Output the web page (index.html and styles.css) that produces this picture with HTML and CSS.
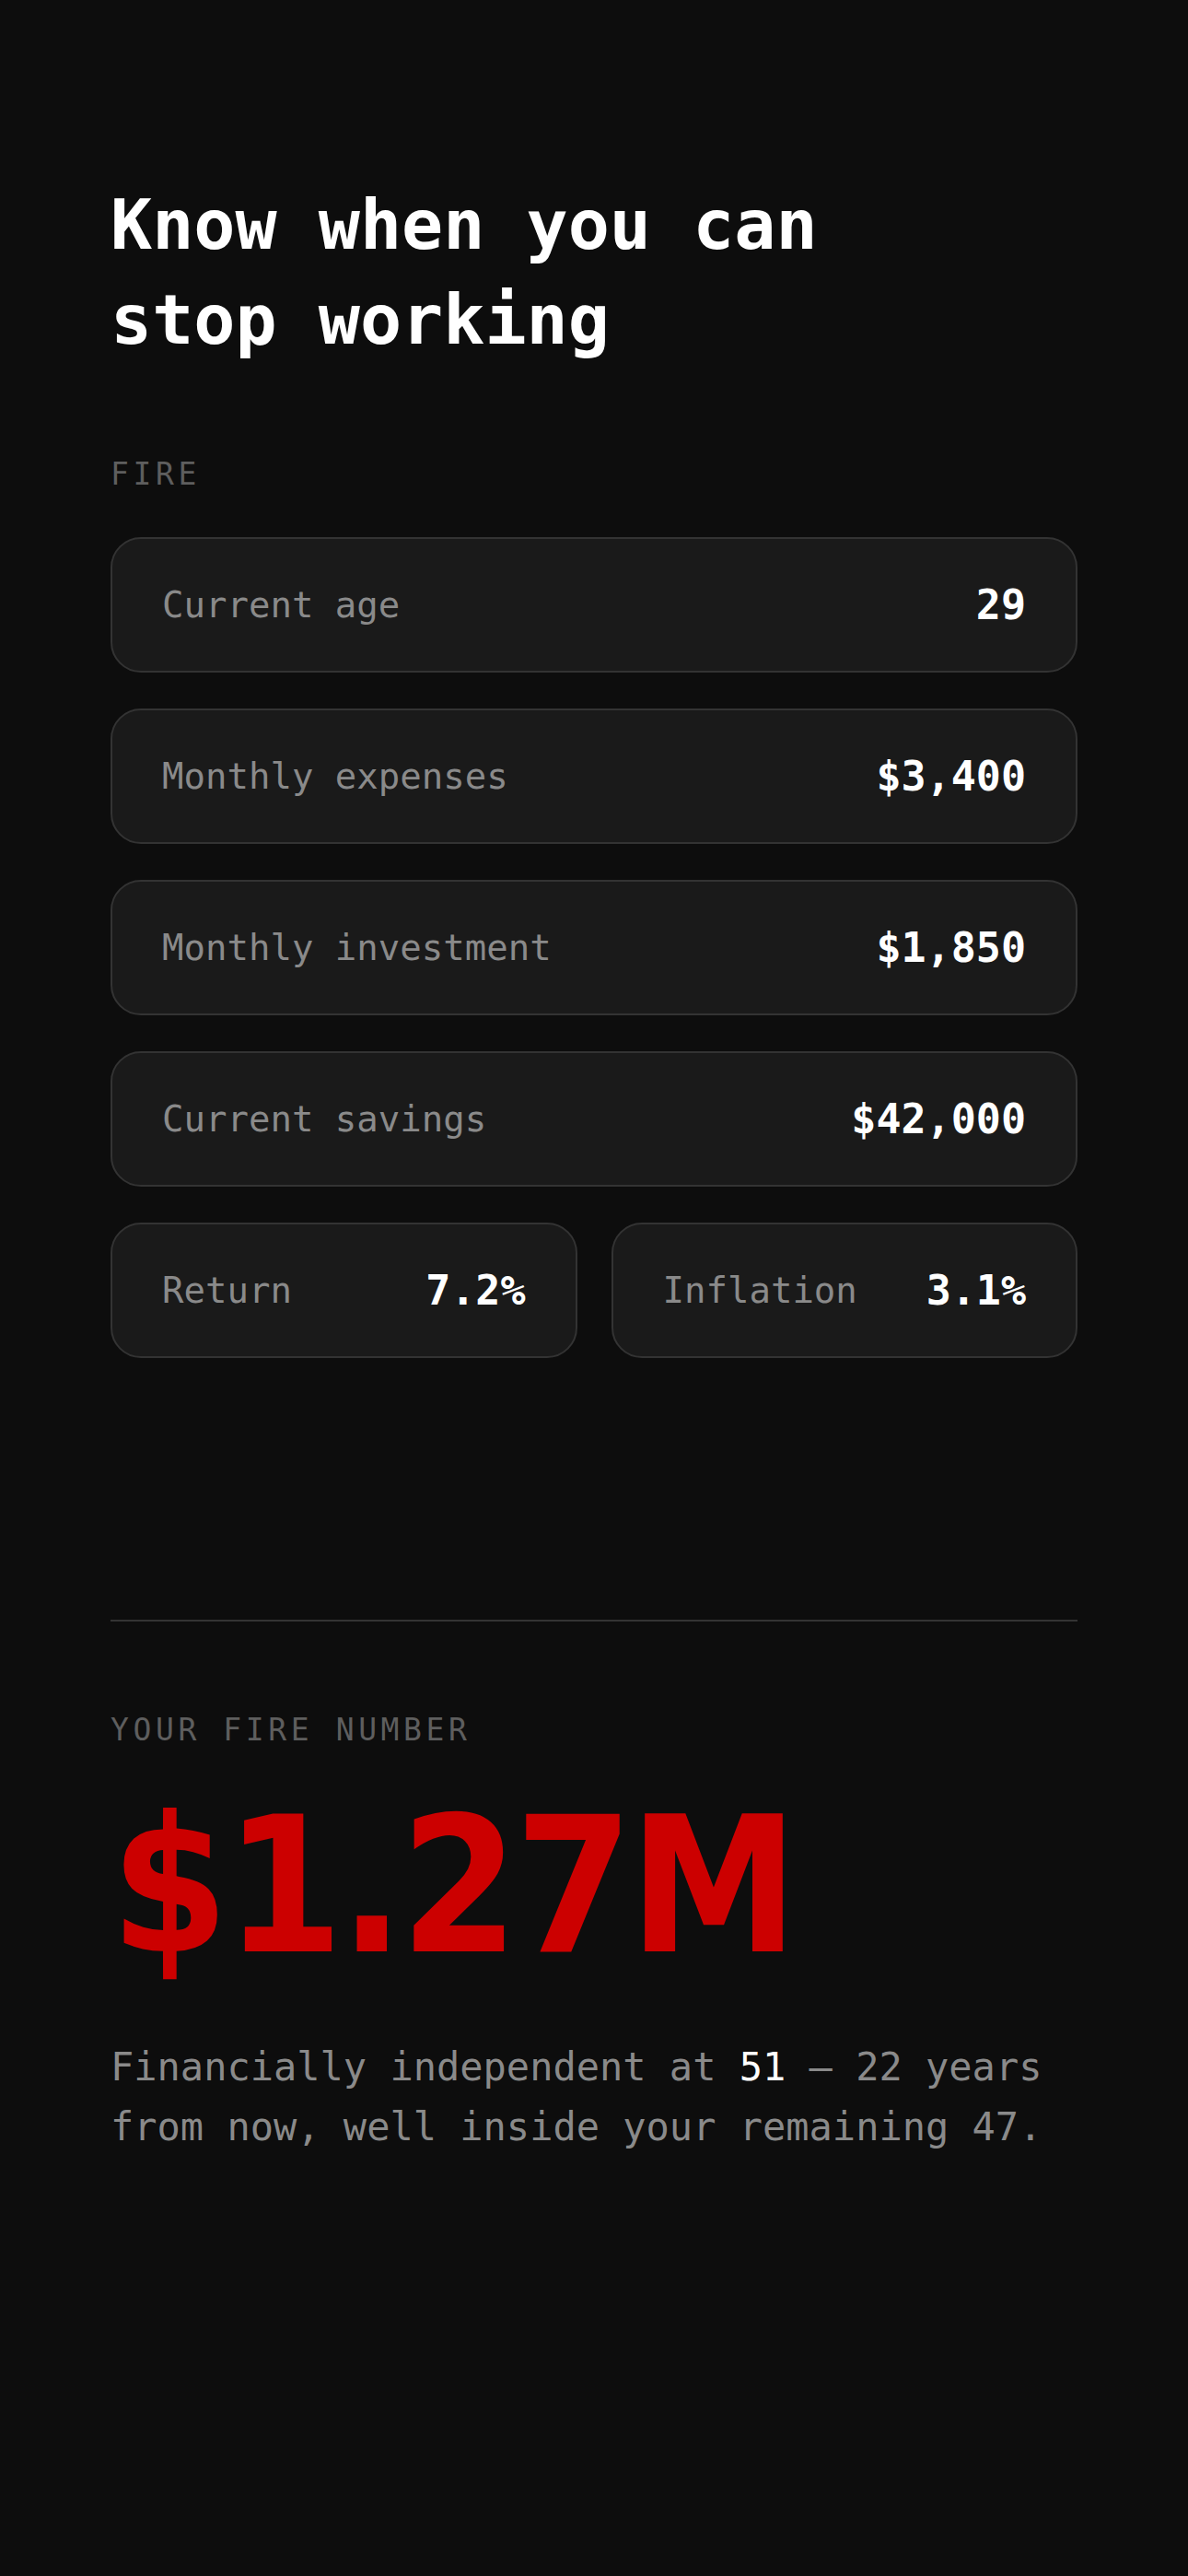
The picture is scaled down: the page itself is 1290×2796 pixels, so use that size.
FILE: index.html
```html
<!DOCTYPE html>
<html lang="en">
<head>
    <meta charset="UTF-8">
    <meta name="viewport" content="width=device-width, initial-scale=1.0">
    <title>FIRE Calculator</title>
    <link rel="stylesheet" href="styles.css">
</head>
<body>
    <main class="page">
        <h1 class="title">Know when you can stop working</h1>

        <section class="inputs">
            <div class="section-label">FIRE</div>
            <div class="fields">
                <div class="field">
                    <span class="field-label">Current age</span>
                    <span class="field-value">29</span>
                </div>
                <div class="field">
                    <span class="field-label">Monthly expenses</span>
                    <span class="field-value">$3,400</span>
                </div>
                <div class="field">
                    <span class="field-label">Monthly investment</span>
                    <span class="field-value">$1,850</span>
                </div>
                <div class="field">
                    <span class="field-label">Current savings</span>
                    <span class="field-value">$42,000</span>
                </div>
                <div class="field-row">
                    <div class="field">
                        <span class="field-label">Return</span>
                        <span class="field-value">7.2%</span>
                    </div>
                    <div class="field">
                        <span class="field-label">Inflation</span>
                        <span class="field-value">3.1%</span>
                    </div>
                </div>
            </div>
        </section>

        <hr class="divider">

        <section class="result">
            <div class="section-label">YOUR FIRE NUMBER</div>
            <div class="fire-number">$1.27M</div>
            <p class="summary">Financially independent at <span class="hl">51</span> — 22 years from now, well inside your remaining 47.</p>
        </section>
    </main>
</body>
</html>
```

FILE: styles.css
```css
html, body {
    margin: 0;
    background-color: #0d0d0d;
}
body {
    font-family: "DejaVu Sans Mono", "Liberation Mono", monospace;
    color: #ffffff;
    min-height: 2796px;
}
.page {
    padding: 193px 120px 0 120px;
}
.title {
    margin: 0;
    max-width: 860px;
    font-size: 75px;
    line-height: 103px;
    font-weight: bold;
    color: #ffffff;
}
.section-label {
    font-size: 33px;
    line-height: 40px;
    letter-spacing: 4.6px;
    color: #5e5e5e;
}
.inputs {
    margin-top: 96px;
}
.fields {
    margin-top: 48px;
    display: flex;
    flex-direction: column;
    gap: 39px;
}
.field {
    box-sizing: border-box;
    height: 147px;
    padding: 0 54px;
    display: flex;
    align-items: center;
    justify-content: space-between;
    background-color: #1a1a1a;
    border: 2px solid #333333;
    border-radius: 33px;
}
.field-row {
    display: grid;
    grid-template-columns: 1fr 1fr;
    gap: 37px;
}
.field-label {
    font-size: 39px;
    color: #8a8a8a;
}
.field-value {
    font-size: 45px;
    font-weight: bold;
    color: #ffffff;
}
.divider {
    margin: 284px 0 0 0;
    border: none;
    height: 2px;
    background-color: #333333;
}
.result {
    margin-top: 98px;
}
.fire-number {
    margin-top: 47px;
    font-family: "DejaVu Sans Condensed", "DejaVu Sans", sans-serif;
    font-stretch: condensed;
    font-weight: bold;
    font-size: 205px;
    line-height: 205px;
    letter-spacing: -4px;
    color: #cc0000;
}
.summary {
    margin: 61px 0 0 0;
    font-size: 42px;
    line-height: 65px;
    color: #8a8a8a;
}
.hl {
    color: #ffffff;
}
```
